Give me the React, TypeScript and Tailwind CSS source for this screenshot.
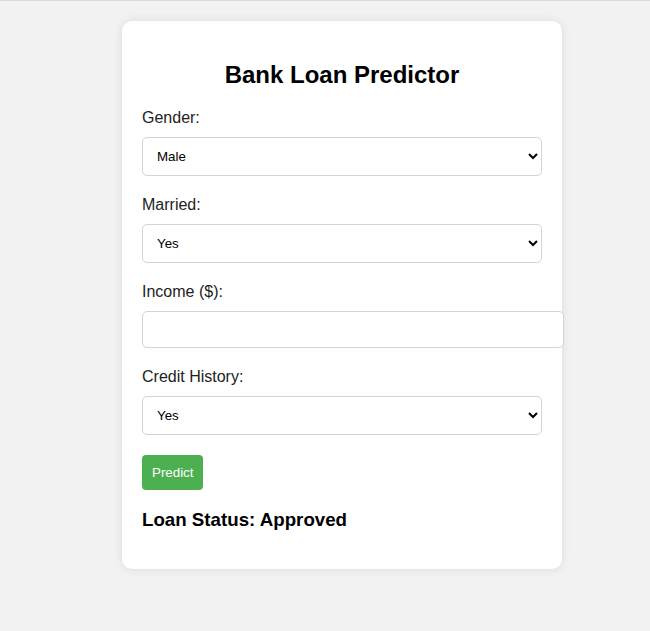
export default function App() {
    const fieldClass = "block w-full border border-[#d4d4d4] rounded-[5px] bg-white px-[10px] py-[10px] text-[13.33px] text-black mt-[10px] mb-[20px]";
    return (
        <div className="min-h-[631px] bg-[#f2f2f2] border-t border-[#d9d9d9] pt-[20px] pb-[20px] font-['Liberation_Sans',Arial,sans-serif] text-black">
            <div className="ml-[122px] w-[440px] bg-white rounded-[10px] p-[20px] shadow-[0_0_10px_rgba(0,0,0,0.1)]">
                <h2 className="text-center text-[24px] font-bold my-[20px] leading-[27.6px]">Bank Loan Predictor</h2>
                <form onSubmit={(e) => e.preventDefault()}>
                    <label className="block text-[16px] leading-[18.4px] text-[#222]">Gender:</label>
                    <select className={fieldClass} defaultValue="Male">
                        <option>Male</option>
                        <option>Female</option>
                    </select>
                    <label className="block text-[16px] leading-[18.4px] text-[#222]">Married:</label>
                    <select className={fieldClass} defaultValue="Yes">
                        <option>Yes</option>
                        <option>No</option>
                    </select>
                    <label className="block text-[16px] leading-[18.4px] text-[#222]">Income ($):</label>
                    <input type="number" className="block w-[422px] border border-[#d4d4d4] rounded-[5px] bg-white px-[10px] py-[10px] text-[13.33px] leading-[15px] mt-[9px] mb-[20px]" />
                    <label className="block text-[16px] leading-[18.4px] text-[#222]">Credit History:</label>
                    <select className={fieldClass} defaultValue="Yes">
                        <option>Yes</option>
                        <option>No</option>
                    </select>
                    <button type="submit" className="block bg-[#4caf50] text-white text-[13.33px] leading-[15px] px-[10px] py-[10px] rounded-[4px]">Predict</button>
                </form>
                <h3 className="text-[18.72px] font-bold leading-[21.5px] my-[18.72px]">Loan Status: Approved</h3>
            </div>
        </div>
    );
}
